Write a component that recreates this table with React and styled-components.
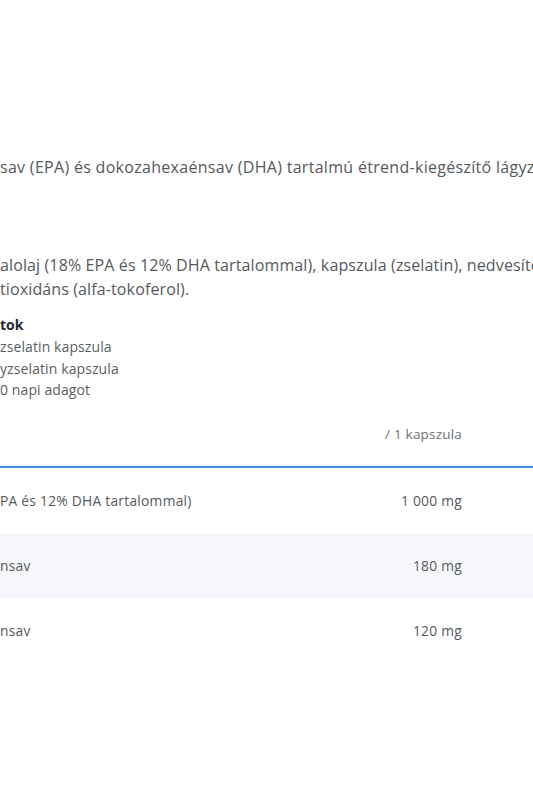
import React from "react";
import styled, { createGlobalStyle } from "styled-components";

const Global = createGlobalStyle`
  html, body { margin: 0; padding: 0; background: #fff; overflow: hidden; }
  body { font-family: "Open Sans", Lato, sans-serif; }
`;

const Page = styled.div`
  width: 533px;
  height: 800px;
  overflow: hidden;
  padding-top: 155px;
  box-sizing: border-box;
`;

const Lead = styled.p`
  margin: 0;
  font-size: 16px;
  line-height: 24px;
  color: #55595e;
  white-space: nowrap;
  letter-spacing: 0.3px;
`;

const Ingredients = styled.div`
  margin-top: 74px;
  display: flex;
  flex-direction: column;
`;

const Line = styled.div`
  font-size: 16px;
  line-height: 24px;
  color: #55595e;
  white-space: nowrap;
  letter-spacing: 0.12px;
`;

const Pack = styled.div`
  margin-top: 13px;
  display: flex;
  flex-direction: column;
`;

const PackTitle = styled.div`
  font-size: 14px;
  font-weight: 700;
  line-height: 22px;
  color: #1d2836;
`;

const PackLine = styled.div`
  font-size: 14px;
  line-height: 21.5px;
  color: #5a5e63;
  white-space: nowrap;
  letter-spacing: 0.1px;
`;

const Table = styled.div`
  margin-top: 1px;
  display: flex;
  flex-direction: column;
`;

const HeadRow = styled.div`
  display: flex;
  justify-content: flex-end;
  align-items: center;
  height: 64px;
  padding-right: 71px;
  border-bottom: 2px solid #4a8fdc;
  font-size: 13.5px;
  color: #6d7176;
  letter-spacing: 0.2px;
`;

const Row = styled.div`
  display: flex;
  justify-content: space-between;
  align-items: center;
  height: 65px;
  padding-right: 71px;
  background: ${(p) => (p.$shaded ? "#f5f7fb" : "#fff")};
  font-size: 13.8px;
  color: #55595e;
  letter-spacing: 0.25px;
  white-space: nowrap;
`;

const rows = [
  { name: "PA és 12% DHA tartalommal)", value: "1 000 mg" },
  { name: "nsav", value: "180 mg" },
  { name: "nsav", value: "120 mg" },
];

export default function App() {
  return (
    <>
      <Global />
      <Page>
        <Lead>sav (EPA) és dokozahexaénsav (DHA) tartalmú étrend-kiegészítő lágyz</Lead>
        <Ingredients>
          <Line>alolaj (18% EPA és 12% DHA tartalommal), kapszula (zselatin), nedvesítő</Line>
          <Line>tioxidáns (alfa-tokoferol).</Line>
        </Ingredients>
        <Pack>
          <PackTitle>tok</PackTitle>
          <PackLine>zselatin kapszula</PackLine>
          <PackLine>yzselatin kapszula</PackLine>
          <PackLine>0 napi adagot</PackLine>
        </Pack>
        <Table>
          <HeadRow>/ 1 kapszula</HeadRow>
          {rows.map((r, i) => (
            <Row key={i} $shaded={i === 1}>
              <span>{r.name}</span>
              <span>{r.value}</span>
            </Row>
          ))}
        </Table>
      </Page>
    </>
  );
}
